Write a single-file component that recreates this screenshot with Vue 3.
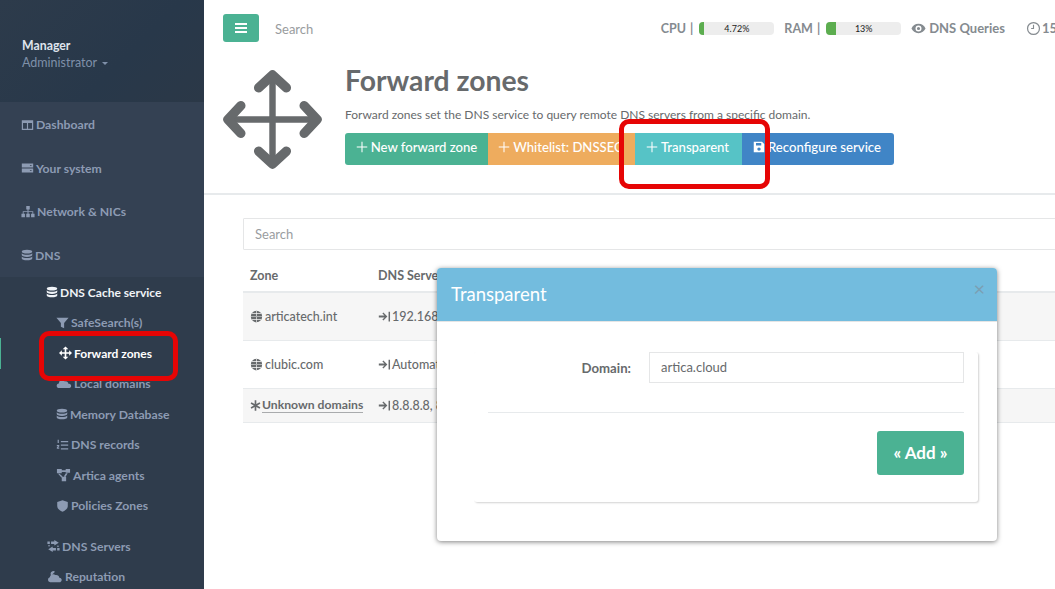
<script setup>
const subItems = [
  { label: 'SafeSearch(s)', icon: 'filter', w: 13 },
  { label: 'Forward zones', icon: 'move', w: 13, active: true },
  { label: 'Local domains', icon: 'cloud', w: 16 },
  { label: 'Memory Database', icon: 'db', w: 12 },
  { label: 'DNS records', icon: 'list', w: 13 },
  { label: 'Artica agents', icon: 'nodes', w: 15 },
  { label: 'Policies Zones', icon: 'shield', w: 13 },
]
const topItems = [
  { label: 'Dashboard', icon: 'columns', w: 13 },
  { label: 'Your system', icon: 'server', w: 13 },
  { label: 'Network & NICs', icon: 'sitemap', w: 14 },
  { label: 'DNS', icon: 'db', w: 12 },
]
const lowerItems = [
  { label: 'DNS Servers', icon: 'exchange', w: 13 },
  { label: 'Reputation', icon: 'weather', w: 16 },
]
const paths = {
  filter: 'M0.500 1.500h15L10 8v6.500L6 12.500V8z',
  cloud: 'M1 12.500a2.800 2.800 0 0 1 1-5.200 4 4 0 0 1 7-2.300 3 3 0 0 1 4 2.800 2.400 2.400 0 0 1 1.500 4.700z',
  db: 'M8 1c4 0 7 1 7 2.500S12 6 8 6 1 5 1 3.500 4 1 8 1zM1 5.500C2 7 5 7.500 8 7.500s6-.5 7-2V8c0 1.500-3 2.500-7 2.500S1 9.500 1 8zM1 10c1 1.500 4 2 7 2s6-.5 7-2v2.500C15 14 12 15 8 15s-7-1-7-2.500z',
  columns: 'M1 2h14v12H1zM2.500 5.500V12.500H7.300V5.500zM8.700 5.500V12.500H13.500V5.500z',
  server: 'M1 2.500h14v5H1zM1 8.500h14v5H1zM11 4.500v1h2v-1zM11 10.500v1h2v-1z',
  sitemap: 'M6 1h4v4H8.600v2H14v3h1.500v4h-4v-4H13V8H8.600v2H10v4H6v-4h1.400V8H3v2h1.500v4h-4v-4H2V7h5.400V5H6z',
  list: 'M6 3h9v1.500H6zM6 7.500h9V9H6zM6 12h9v1.500H6zM2 1.500h1.500v4H2zM1 8h3v1.500L2.500 11H4v1.500H1V11l1.500-1.500H1z',
  nodes: 'M0.500 1h5.500v5H0.500zM10.500 1h5v4.500h-5zM6 10h5v5H6zM6 2.500h4.500v2H6zM3.500 6.500l3.600 3.300-1.300 1.400L1.800 6.500zM12.800 6l-2.600 4.300-1.700-1 2.200-3.300z',
  shield: 'M8 1l6.500 2v5c0 3-2.500 5.500-6.500 7-4-1.500-6.500-4-6.500-7V3z',
  move: 'M8 0l3.500 3.500H9V7h3.500V4.500L16 8l-3.500 3.500V9H9v3.500h2.500L8 16l-3.500-3.500H7V9H3.500v2.500L0 8l3.500-3.500V7H7V3.500H4.500z',
  exchange: 'M9 .5l5.500 3.500L9 7.500V5.500H5V2.500h4zM7 8.500v2h4v3H7v2L1.500 12zM.5 2.500h3v3h-3zM12.500 10.500h3v3h-3zM13.500 7l1.200 1.200-1.200 1.200-1.200-1.200zM2.500 6.500l1.200 1.200-1.200 1.200-1.200-1.200z',
  weather: 'M3 3.500a3 3 0 0 1 5-1.500l-2 2a4 4 0 0 0-2 2.500 3 3 0 0 1-1-3zM2.500 14a3 3 0 0 1-.5-5.800 4 4 0 0 1 6.500-2.400 3.500 3.500 0 0 1 4.500 3 2.700 2.700 0 0 1 1 5.200z',
  globe: 'M8 1a7 7 0 1 0 0 14A7 7 0 0 0 8 1zM1.100 7.600h13.800v.8H1.100zM2.500 4.100h11v.7h-11zM2.500 11.200h11v.7h-11zM7.600 1.100h.8v2.900h-.8zM7.600 4.900h.8v2.600h-.8zM7.600 8.500h.8v2.600h-.8zM7.600 12h.8v2.900h-.8z',
  arrow: 'M1 6.900h7L5.400 4.300 6.600 3.100 11.500 8l-4.900 4.900-1.200-1.200L8 9.100H1zM13 2h1.800v12H13z',
  asterisk: 'M6.800 0.500h2.400v5.400l4.700-2.700 1.200 2.100L10.400 8l4.700 2.700-1.200 2.100-4.700-2.700v5.400H6.800v-5.400l-4.700 2.700-1.200-2.100L5.600 8 .9 5.300l1.200-2.100 4.700 2.700z',
  eye: 'M8 3c3.500 0 6.300 2.200 7.500 5-1.200 2.800-4 5-7.500 5S1.700 10.800.5 8C1.700 5.200 4.500 3 8 3zm0 1.800a3.200 3.200 0 1 0 0 6.400 3.200 3.200 0 0 0 0-6.400zM8 6.300a1.700 1.700 0 1 1 0 3.400 1.700 1.700 0 0 1 0-3.400z',
  clock: 'M8 1a7 7 0 1 0 0 14A7 7 0 0 0 8 1zm0 1.300a5.700 5.700 0 1 1 0 11.400A5.700 5.700 0 0 1 8 2.300zM7.400 4h1.200v4.600H5.500V7.400h1.900z',
  save: 'M1 1h11l3 3v11H1zM4 2.500V6h7V2.500zM8 8.500a2.300 2.300 0 1 0 0 4.600 2.300 2.300 0 0 0 0-4.600z',
  plus: 'M7.300 1h1.400v6.300H15v1.400H8.700V15H7.300V8.700H1V7.300h6.300z',
}
const rows = [
  { zone: 'articatech.int', icon: 'globe', dns: '192.168.1.1', cls: 'odd' },
  { zone: 'clubic.com', icon: 'globe', dns: 'Automatic', cls: '' },
  { zone: 'Unknown domains', icon: 'asterisk', dns: '8.8.8.8, 8.8.4.4', cls: 'odd short', link: true },
]
const stats = [
  { name: 'CPU', value: '4.72%', width: '5px' },
  { name: 'RAM', value: '13%', width: '10px' },
]
</script>

<template>
  <div class="page">
    <aside class="sidebar">
      <div class="profile">
        <div class="profile-name">Manager</div>
        <div class="profile-role">Administrator <span class="caret"></span></div>
      </div>
      <nav class="top-nav">
        <div v-for="item in topItems" :key="item.label" class="nav-item">
          <svg class="ico" :style="{ width: item.w + 'px' }" viewBox="0 0 16 16"><path :d="paths[item.icon]" fill-rule="evenodd" /></svg>{{ item.label }}
        </div>
      </nav>
      <div class="sub-nav">
        <div class="sub-title">
          <svg class="ico db-title" viewBox="0 0 16 16"><path :d="paths.db" /></svg>DNS Cache service
        </div>
        <div v-for="item in subItems" :key="item.label" class="sub-item" :class="{ active: item.active }">
          <svg class="ico" :style="{ width: item.w + 'px' }" viewBox="0 0 16 16"><path :d="paths[item.icon]" fill-rule="evenodd" /></svg>{{ item.label }}
        </div>
        <div v-for="(item, i) in lowerItems" :key="item.label" class="sub-lower" :class="{ first: i === 0 }">
          <svg class="ico" :style="{ width: item.w + 'px' }" viewBox="0 0 16 16"><path :d="paths[item.icon]" /></svg>{{ item.label }}
        </div>
      </div>
    </aside>

    <main class="main">
      <header class="topbar">
        <button class="burger" type="button" aria-label="Menu"><span></span><span></span><span></span></button>
        <span class="top-search">Search</span>
        <div class="stats">
          <template v-for="s in stats" :key="s.name">
            <span class="stat-name">{{ s.name }} |</span>
            <span class="bar"><i class="bar-fill" :style="{ width: s.width }"></i><b>{{ s.value }}</b></span>
          </template>
          <span class="stat-link">
            <svg class="ico big" viewBox="0 0 16 16"><path :d="paths.eye" fill-rule="evenodd" /></svg>DNS Queries
          </span>
          <span class="stat-link clock">
            <svg class="ico big" viewBox="0 0 16 16"><path :d="paths.clock" fill-rule="evenodd" /></svg>15:42:08
          </span>
        </div>
      </header>

      <section class="heading">
        <svg class="move" viewBox="0 0 100 100" fill="none" stroke="#676a6c" stroke-linecap="round" stroke-linejoin="round">
          <path d="M50 6V94M6 50H94" stroke-width="6.500" />
          <path d="M36 18 50 5 64 18M36 82 50 95 64 82M18 36 5 50 18 64M82 36 95 50 82 64" stroke-width="9.500" />
        </svg>
        <div class="heading-text">
          <h1>Forward zones</h1>
          <p>Forward zones set the DNS service to query remote DNS servers from a specific domain.</p>
          <div class="btn-group">
            <button class="seg green" type="button"><svg viewBox="0 0 16 16"><path :d="paths.plus" /></svg>New forward zone</button>
            <button class="seg orange" type="button"><svg viewBox="0 0 16 16"><path :d="paths.plus" /></svg>Whitelist: DNSSEC</button>
            <button class="seg teal" type="button"><svg viewBox="0 0 16 16"><path :d="paths.plus" /></svg>Transparent</button>
            <button class="seg blue" type="button"><svg viewBox="0 0 16 16"><path :d="paths.save" fill-rule="evenodd" /></svg>Reconfigure service</button>
          </div>
        </div>
      </section>

      <section class="content">
        <div class="search-box">Search</div>
        <div class="table">
          <div class="thead">
            <span class="col-zone">Zone</span>
            <span class="col-dns">DNS Servers</span>
          </div>
          <div v-for="r in rows" :key="r.zone" class="row" :class="r.cls">
            <span class="col-zone">
              <svg class="ico cell" viewBox="0 0 16 16"><path :d="paths[r.icon]" fill-rule="evenodd" /></svg>
              <span :class="{ link: r.link }">{{ r.zone }}</span>
            </span>
            <span class="col-dns">
              <svg class="ico arrow" viewBox="0 0 16 16"><path :d="paths.arrow" fill-rule="evenodd" /></svg>{{ r.dns }}
            </span>
          </div>
        </div>
      </section>
    </main>

    <div class="modal">
      <div class="modal-head">
        <span class="modal-title">Transparent</span>
        <span class="close">×</span>
      </div>
      <div class="modal-body">
        <div class="form-box">
          <div class="field">
            <label>Domain:</label>
            <div class="input">artica.cloud</div>
          </div>
          <div class="rule"></div>
          <div class="actions"><button class="add" type="button">« Add »</button></div>
        </div>
      </div>
    </div>

    <div class="mark mark-side"></div>
    <div class="mark mark-btn"></div>
    <div class="active-line"></div>
  </div>
</template>

<style scoped>
.page {
  position: relative;
  display: flex;
  width: 1055px;
  height: 589px;
  overflow: hidden;
  background: #fff;
  font-family: Lato, "Open Sans", sans-serif;
  font-size: 13px;
  color: #676a6c;
}
.ico { width: 14px; height: 14px; fill: currentColor; flex: none; margin-right: 2px; }
.ico.db-title { width: 12px; }
.ico.big { width: 15px; height: 15px; margin-right: 3px; }
.ico.cell { width: 13px; height: 13px; margin-right: 2px; }
.ico.arrow { width: 13px; height: 13px; margin-right: 1px; }

.sidebar { width: 204px; flex: none; background: #2f3d4d; color: #8d9bb3; font-weight: 700; font-size: 12.200px; }
.profile {
  height: 102px;
  box-sizing: border-box;
  padding: 39px 0 0 22px;
  background: linear-gradient(135deg, #2d3b4b, #28384a 60%, #2b3847);
}
.profile-name { color: #dfe4ed; font-size: 12.300px; line-height: 14px; }
.profile-role { color: #7f90a9; font-weight: 400; font-size: 12.500px; line-height: 20px; }
.caret { display: inline-block; border: 3px solid transparent; border-top-color: #7f90a9; border-bottom: 0; margin: 0 0 2px 2px; }
.top-nav { background: #344153; height: 175px; padding-top: 1px; box-sizing: border-box; }
.nav-item { height: 43.500px; display: flex; align-items: center; padding-left: 21px; box-sizing: border-box; }
.sub-nav { background: #2f3c4c; height: 320px; padding-top: 0.400px; box-sizing: border-box; }
.sub-title { height: 30px; display: flex; align-items: center; padding-left: 46px; color: #f0f3f7; font-size: 12px; }
.sub-item { height: 30.500px; display: flex; align-items: center; padding-left: 56px; }
.sub-item.active { color: #fff; padding-left: 59px; font-size: 12px; }
.sub-lower { height: 30.500px; display: flex; align-items: center; padding-left: 47px; }
.sub-lower.first { margin-top: 10px; }

.main { flex: 1; min-width: 0; }
.topbar { height: 58px; display: flex; align-items: flex-start; padding: 14px 0 0 19px; box-sizing: border-box; }
.burger {
  width: 36px; height: 28px; flex: none; padding: 0; border: 0; border-radius: 3px; background: #4bb293;
  display: flex; flex-direction: column; align-items: center; justify-content: center; gap: 2px;
}
.burger span { display: block; width: 12px; height: 2px; background: #fff; }
.top-search { margin: 7px 0 0 16px; color: #999c9e; line-height: 16px; }
.stats { display: flex; align-items: center; flex: none; height: 28px; margin-left: 347.500px; color: #858b90; font-weight: 700; white-space: nowrap; }
.stat-name { margin-right: 6px; font-size: 12.500px; word-spacing: 1px; }
.bar {
  position: relative; width: 75px; height: 13px; margin-right: 10px; border-radius: 4px; background: #ededed;
  display: block; font-size: 9px; line-height: 13px; text-align: center; color: #222; overflow: hidden;
}
.bar b { position: relative; font-weight: 400; }
.bar-fill { position: absolute; left: 0; top: 0; bottom: 0; background: #5cad4f; }
.stat-link { display: flex; align-items: center; }
.stat-link.clock { margin-left: 21px; }
.stat-link.clock .ico.big { margin-right: 1px; }

.heading { display: flex; height: 137px; box-sizing: border-box; border-bottom: 2px solid #e7eaec; padding-left: 19px; }
.move { width: 99px; height: 99px; flex: none; margin-top: 12px; }
.heading-text { margin-left: 23px; }
h1 { margin: 6px 0 0; font-size: 28.300px; line-height: 32px; font-weight: 700; color: #676a6c; }
.heading-text p { margin: 11px 0 0; font-size: 12px; line-height: 16px; }
.btn-group { display: flex; margin-top: 10px; }
.seg {
  height: 32px; box-sizing: border-box; border: 0; padding: 0 0 4px; display: flex; align-items: center; justify-content: center;
  color: #fff; font: 500 13.150px Lato, sans-serif;
}
.seg svg { width: 12px; height: 12px; fill: #fff; margin-right: 3px; }
.green { width: 143px; background: #4bb293; border-radius: 3px 0 0 3px; }
.orange { width: 147px; background: #eeac5e; padding-right: 2px; }
.teal { width: 107px; background: #56c3c6; padding-right: 2px; }
.blue { width: 152px; background: #4085c6; border-radius: 0 3px 3px 0; padding-right: 2px; }

.content { padding: 23px 0 0 39px; }
.search-box {
  width: 840px; height: 32px; box-sizing: border-box; border: 1px solid #e5e6e7; border-radius: 1px;
  padding-left: 11px; line-height: 30px; color: #9a9d9f;
}
.table { width: 840px; margin-top: 9px; }
.thead { display: flex; height: 34px; align-items: center; border-bottom: 2px solid #e7eaec; font-weight: 700; font-size: 12.500px; box-sizing: border-box; }
.col-zone { width: 135px; padding-left: 7px; box-sizing: border-box; display: flex; align-items: center; flex: none; }
.col-dns { display: flex; align-items: center; }
.row { display: flex; align-items: center; height: 48px; border-bottom: 1px solid #e7eaec; box-sizing: border-box; font-weight: 500; font-size: 12.500px; }
.row.odd { background: #f6f6f6; }
.row.short { height: 34px; }
.row.short .ico.cell { width: 11px; margin-right: 1px; }
.link { border-bottom: 1px solid #a9abad; line-height: 14px; font-weight: 700; font-size: 12.200px; }

.modal {
  position: absolute; left: 437px; top: 268px; width: 560px; height: 273px; background: #fff; border-radius: 4px;
  box-shadow: 0 1px 5px rgba(0, 0, 0, .5); overflow: hidden;
}
.modal-head {
  height: 54px; box-sizing: border-box; background: #73bcde; color: #fff; font-size: 18.500px; padding-left: 14px;
  display: flex; align-items: center; justify-content: space-between; border-bottom: 1px solid #e5e5e5;
}
.modal-title { margin-top: -2px; }
.close { color: #7b9fb3; font-size: 20px; margin: -14px 12px 0 0; }
.modal-body { padding: 30px 19px 0 37px; }
.form-box {
  height: 150px; box-sizing: border-box; padding: 0 14px 0 14px; border-radius: 3px;
  box-shadow: 1px 1px 2px rgba(0, 0, 0, .18);
  clip-path: inset(0 -4px -4px 0);
}
.field { display: flex; align-items: center; }
.field label { width: 143px; text-align: right; font-weight: 700; font-size: 13.200px; }
.input {
  width: 315px; height: 31px; margin-left: 18px; box-sizing: border-box; border: 1px solid #e5e6e7;
  padding-left: 11px; line-height: 29px;
}
.rule { height: 1px; margin-top: 29px; background: #e7eaec; }
.actions { display: flex; justify-content: flex-end; margin-top: 18px; }
.add {
  width: 87px; height: 44px; border: 0; border-radius: 3px; background: #4bb293; color: #fff;
  font: 700 17px/44px Lato, sans-serif; padding: 0;
}

.mark { position: absolute; box-sizing: border-box; border: 5px solid #e60505; border-radius: 10px; }
.mark-side { left: 39px; top: 331px; width: 139px; height: 50px; }
.mark-btn { left: 619px; top: 119px; width: 151px; height: 70px; }
.active-line { position: absolute; left: 0; top: 338px; width: 1px; height: 31px; background: #4bb293; }
</style>
